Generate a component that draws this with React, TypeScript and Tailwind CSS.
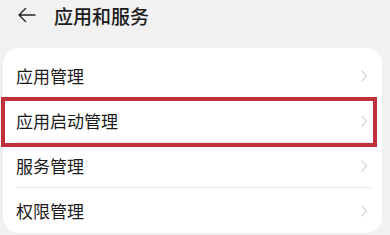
import React from "react";

const Chevron = () => (
  <svg width="8" height="14" viewBox="0 0 8 14" fill="none">
    <path d="M2 2 L6.5 7 L2 12" stroke="#c8c8c8" strokeWidth="1.1" strokeLinecap="round" strokeLinejoin="round" />
  </svg>
);

const Row = ({ label, divider }: { label: string; divider?: boolean }) => (
  <div className="relative flex h-[45px] items-center justify-between pl-[13px] pr-[14px]">
    <span className="text-[17px] text-[#1b1b1b] leading-none">{label}</span>
    <Chevron />
    {divider && <div className="absolute bottom-0 left-[13px] right-[12px] h-px bg-[#e6e6e6]" />}
  </div>
);

export default function App() {
  return (
    <div
      className="relative h-[235px] w-[390px] overflow-hidden bg-[#f1f1f1]"
      style={{ fontFamily: '"Noto Sans CJK SC", "Noto Sans", sans-serif' }}
    >
      <div className="flex h-[30px] items-center pl-[17px]">
        <svg width="19" height="16" viewBox="0 0 19 16" fill="none">
          <path d="M18 8 H2 M8.5 1.5 L2 8 L8.5 14.5" stroke="#222" strokeWidth="1.4" strokeLinecap="round" strokeLinejoin="round" />
        </svg>
        <span className="ml-[18px] text-[19px] font-medium text-[#1b1b1b] leading-none">应用和服务</span>
      </div>
      <div className="mx-[3px] mt-[18px] w-[379px] rounded-[16px] bg-white pt-[5px]">
        <Row label="应用管理" divider />
        <Row label="应用启动管理" divider />
        <Row label="服务管理" divider />
        <Row label="权限管理" />
      </div>
      <div className="absolute left-[1px] top-[97px] h-[50px] w-[376px] border-[4px] border-[#c1313b]" />
    </div>
  );
}
